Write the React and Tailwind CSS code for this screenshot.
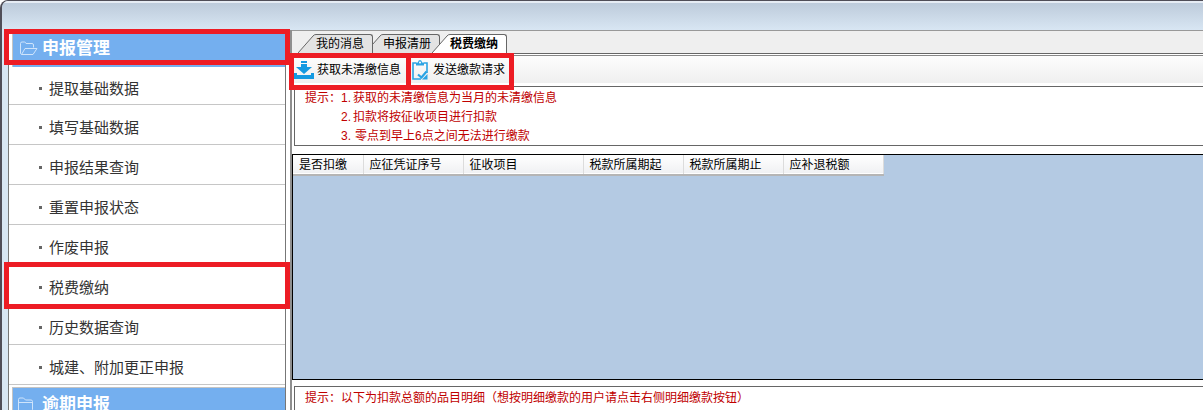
const menuItems = [
  { label: '提取基础数据' },
  { label: '填写基础数据' },
  { label: '申报结果查询' },
  { label: '重置申报状态' },
  { label: '作废申报' },
  { label: '税费缴纳', marked: true },
  { label: '历史数据查询' },
  { label: '城建、附加更正申报' },
];

const columns = [
  { label: '是否扣缴', width: 'w-[70px]' },
  { label: '应征凭证序号', width: 'w-[100px]' },
  { label: '征收项目', width: 'w-[120px]' },
  { label: '税款所属期起', width: 'w-[100px]' },
  { label: '税款所属期止', width: 'w-[100px]' },
  { label: '应补退税额', width: 'w-[100px]' },
];

function OpenFolderIcon() {
  return (
    <svg width="18" height="15" viewBox="0 0 18 15" fill="none" stroke="#cfe4fb" strokeWidth="1" aria-hidden="true">
      <path d="M1.5 13.5Q.5 13 .5 12V2.5Q.5 1 2 1H4.5Q5.5 1 6 2.5H12Q13.5 2.5 13.5 4V6.5M1.5 13.5L5 7.5H17L13 13.5H1.5Z" />
    </svg>
  );
}

function FolderIcon() {
  return (
    <svg width="18" height="15" viewBox="0 0 18 15" fill="none" stroke="#cfe4fb" strokeWidth="1" aria-hidden="true">
      <path d="M.5 13V2.5Q.5 1 2 1H5.5L7.5 3H13Q14.5 3 14.5 4.5V12.5Q14.5 14 13 14H2Q.5 14 .5 13ZM.5 5.5H14.5" />
    </svg>
  );
}

function DownloadIcon() {
  return (
    <svg width="20" height="20" viewBox="0 0 20 20" fill="#149ae1" aria-hidden="true">
      <path d="M7 1H13V3H7ZM7 4H13V7H18L10 14L2 7H7Z" />
      <path d="M0 13H3V15H17V13H20V19H0Z" />
    </svg>
  );
}

function ClipboardIcon() {
  return (
    <svg width="16" height="20" viewBox="0 0 16 20" fill="none" stroke="#2aa3e4" aria-hidden="true">
      <path d="M4 3H1V19H9M12 3H15V13" strokeWidth="1.6" />
      <path d="M4 2.5H6Q6 0 8 0T10 2.5H12V5.5H4Z" fill="#2aa3e4" stroke="none" />
      <circle cx="8" cy="2.5" r="1" fill="#fff" stroke="none" />
      <path d="M6 14.5L9.5 17.5L14.5 11.5" strokeWidth="2.2" />
      <path d="M10 19.5L15.5 19.5V14Z" fill="#2aa3e4" stroke="none" />
    </svg>
  );
}

// Red frame laid over the part of the screen it points out
function Mark({ className }) {
  return <span className={`pointer-events-none absolute z-20 border-[5px] border-[#ed1c24] ${className}`} />;
}

function Tab({ label, active, className = '' }) {
  const fill = active ? '#ffffff' : '#e3e3e3';
  return (
    <button
      type="button"
      role="tab"
      aria-selected={Boolean(active)}
      className={`relative flex items-stretch ${className}`}
    >
      <svg width="18" height="19" viewBox="0 0 18 19" aria-hidden="true">
        <path d="M0 19L15 2Q16 .5 18 .5V19Z" fill={fill} />
        <path d="M0 19L15 2Q16 .5 18 .5" fill="none" stroke="#666" />
      </svg>
      <span
        className={`h-[19px] rounded-tr-[3px] border-t border-r border-[#666] pr-2 text-xs leading-[18px] ${
          active ? 'bg-white font-bold' : 'bg-[#e3e3e3]'
        }`}
      >
        {label}
      </span>
    </button>
  );
}

function Sidebar() {
  return (
    <nav className="w-[278px] shrink-0 border-x border-[#777] bg-white">
      <div className="relative pt-1 pl-[3px]">
        <button
          type="button"
          className="flex h-[33px] w-full items-center gap-1 border-l border-[#c4c4c4] bg-[#74afef] pb-1 pl-[7px] text-[17px] leading-6 font-bold text-white"
        >
          <OpenFolderIcon />
          申报管理
        </button>
        <Mark className="-top-px -right-[5px] -left-[5px] h-9" />
      </div>
      <ul>
        {menuItems.map((item) => (
          <li key={item.label} className="relative h-10 border-b border-[#c6c6c6] first:h-[38px]">
            <a href="#" className="flex h-full items-center gap-[7px] pt-1.5 pl-[30px] text-[15px] leading-6 text-[#333]">
              <span className="size-[3px] bg-[#666]" />
              {item.label}
            </a>
            {item.marked && <Mark className="-top-[3px] -right-[5px] -left-[5px] h-[47px]" />}
          </li>
        ))}
      </ul>
      <div className="pt-0.5 pl-[3px]">
        <button
          type="button"
          className="flex h-[34px] w-full items-center gap-1 border-t border-l border-[#c4c4c4] bg-[#74afef] pl-[5px] text-[17px] leading-6 font-bold text-white"
        >
          <FolderIcon />
          <span className="pl-0.5">逾期申报</span>
        </button>
      </div>
    </nav>
  );
}

function App() {
  return (
    <div className="flex h-screen flex-col overflow-hidden rounded-tl-lg border-t border-l-2 border-[#504e58] bg-[#d8e6f3] font-['Liberation_Sans','Noto_Sans_CJK_SC',sans-serif] text-xs text-black">
      <header className="h-[29px] shrink-0 border-t-2 border-[#e6ecf4] bg-linear-to-b from-[#bdcbdb] to-[#d8e6f3]" />
      <div className="flex min-h-0 flex-1 pl-1.5">
        <Sidebar />
        <div className="flex min-w-0 flex-1 bg-white pl-1">
          <main className="flex min-w-0 flex-1 flex-col border-l-2 border-[#8f8f8f]">
            <div role="tablist" className="flex h-6 shrink-0 items-end border-t border-b border-t-[#999] border-b-[#666] bg-[#efefef] pl-1.5">
              <Tab label="我的消息" className="z-10" />
              <Tab label="申报清册" className="-ml-2" />
              <Tab label="税费缴纳" active className="-ml-2" />
            </div>
            <div className="mt-px flex h-7 shrink-0 items-center border-t border-[#888] bg-linear-to-b from-[#fdfdfd] to-[#efefef]">
              <div className="relative h-full">
                <button type="button" className="flex h-full w-[115px] items-center gap-[3px] pl-0.5 whitespace-nowrap">
                  <DownloadIcon />
                  获取未清缴信息
                </button>
                <Mark className="-top-[3px] -right-1 -left-[3px] h-[37px]" />
              </div>
              <div className="relative h-full">
                <button type="button" className="flex h-full w-[104px] items-center gap-[5px] pl-[5px] whitespace-nowrap">
                  <ClipboardIcon />
                  发送缴款请求
                </button>
                <Mark className="-top-[3px] -right-[3px] -left-px h-[37px]" />
              </div>
            </div>
            <section className="mt-[3px] ml-0.5 h-[60px] shrink-0 border-y border-l border-[#666] pt-0.5 pl-2.5 leading-[19px] text-[#c00000]">
              <div className="flex">
                <p className="w-9 shrink-0">提示：</p>
                <ol>
                  <li className="flex"><span className="w-3">1.</span>获取的未清缴信息为当月的未清缴信息</li>
                  <li className="flex"><span className="w-3">2.</span>扣款将按征收项目进行扣款</li>
                  <li className="flex"><span className="w-3.5">3.</span>零点到早上6点之间无法进行缴款</li>
                </ol>
              </div>
            </section>
            <section className="mt-2 h-[226px] shrink-0 border-y border-l border-black bg-[#b4cae3]">
              <table className="table-fixed border-collapse">
                <thead>
                  <tr className="h-5 border-b-2 border-[#b5b5b5] bg-linear-to-b from-white to-[#f0f1f3]">
                    {columns.map((col) => (
                      <th
                        key={col.label}
                        scope="col"
                        className={`border-r border-[#dcdcdc] p-0 pt-px pl-1.5 text-left leading-[18px] font-normal whitespace-nowrap ${col.width}`}
                      >
                        {col.label}
                      </th>
                    ))}
                  </tr>
                </thead>
              </table>
            </section>
            <section className="mt-1.5 ml-0.5 flex-1 border-t border-l border-[#666] pt-0.5 pl-2.5 leading-[19px] text-[#c00000]">
              <p>提示：以下为扣款总额的品目明细（想按明细缴款的用户请点击右侧明细缴款按钮）</p>
            </section>
          </main>
        </div>
      </div>
    </div>
  );
}

export default App;
